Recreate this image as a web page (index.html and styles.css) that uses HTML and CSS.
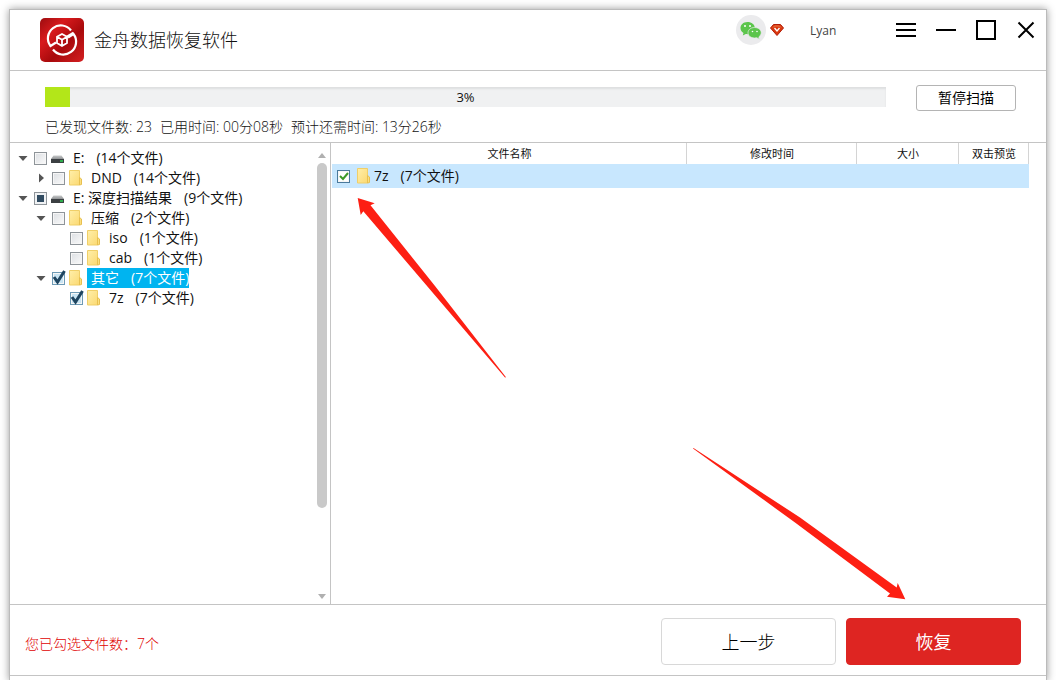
FILE: index.html
```html
<!DOCTYPE html>
<html lang="zh-CN">
<head>
<meta charset="utf-8">
<title>金舟数据恢复软件</title>
<link rel="stylesheet" href="styles.css">
</head>
<body>
<svg class="defs" aria-hidden="true">
  <defs>
    <linearGradient id="red" x1="0" y1="0" x2="1" y2="1">
      <stop offset="0" stop-color="#9c0d10"/><stop offset=".3" stop-color="#d81a1d"/><stop offset=".6" stop-color="#a80a0c"/><stop offset="1" stop-color="#d42022"/>
    </linearGradient>
    <linearGradient id="yellow" x1="0" y1="0" x2="1" y2="1">
      <stop offset="0" stop-color="#ffefaa"/><stop offset="1" stop-color="#fbd972"/>
    </linearGradient>
    <linearGradient id="metal" x1="0" y1="0" x2="0" y2="1">
      <stop offset="0" stop-color="#c9cbcc"/><stop offset="1" stop-color="#8f9294"/>
    </linearGradient>
    <symbol id="folder" viewBox="0 0 15 16">
      <path d="M1.500.5h10v14.500h-10z" fill="url(#yellow)" stroke="#f0cf68"/>
      <path d="M11.500 7.500L13.500 9v5.500l-2 .5z" fill="#fbdf80" stroke="#e8c050"/>
    </symbol>
    <symbol id="drive" viewBox="0 0 15 16">
      <path d="M3.500 5.500h8L14 9H1z" fill="url(#metal)"/>
      <path d="M1 9h13v4H1z" fill="#3b3f42"/>
      <path d="M10 11h3" stroke="#2fae4d" stroke-width="2"/>
    </symbol>
    <symbol id="open" viewBox="0 0 16 16"><path d="M3.500 6h9L8 11z" fill="#555"/></symbol>
    <symbol id="closed" viewBox="0 0 16 16"><path d="M6 3.500v9l5-4.500z" fill="#555"/></symbol>
  </defs>
</svg>
<div class="window">
  <header class="titlebar">
    <svg class="logo" viewBox="0 0 44 44" aria-hidden="true">
      <rect width="44" height="44" rx="5" fill="url(#red)"/>
      <g fill="none" stroke="#fff" stroke-width="2.200">
        <path d="M31 12.500A12.700 12.700 0 0 0 10.500 28L16 24.500"/>
        <path d="M13 31.500A12.700 12.700 0 0 0 33.500 16L28 19.500"/>
        <path d="M22 16l5 2.800v6.200L22 28l-5-3v-6.200zM17 18.800l5 3 5-3M22 21.800V28" stroke-width="1.800"/>
        <path d="M26.500 18.800L33.500 14.500" stroke-width="2"/>
      </g>
    </svg>
    <h1 class="app-name">金舟数据恢复软件</h1>
    <div class="account">
      <svg class="wechat" viewBox="0 0 30 30" aria-hidden="true">
        <circle cx="15" cy="15" r="15" fill="#ebebed"/>
        <path d="M11.500 7C7 7 4.500 10 4.500 13c0 2.200 1.200 3.900 3 5l-.700 2.500 3-1.500c4.500.800 9-1.500 9-6 0-3.500-3.200-6-7.300-6z" fill="#5cc54c"/>
        <path d="M18.500 12.500c-4 0-6.500 2.500-6.500 5.300s2.700 5.200 6.500 5.200l2.200-.300 2.800 1.500-.700-2.300c1.500-1 2.400-2.500 2.400-4.100 0-2.800-2.600-5.300-6.700-5.300z" fill="#5cc54c" stroke="#ebebed" stroke-width=".7"/>
        <g fill="#fff"><circle cx="9" cy="11" r="1"/><circle cx="14" cy="11" r="1"/><circle cx="16.500" cy="16.500" r=".8"/><circle cx="21" cy="16.500" r=".8"/></g>
      </svg>
      <svg class="gem" viewBox="0 0 14 12" aria-hidden="true">
        <path d="M3.500.5h7L13.500 4 7 11.500.5 4z" fill="#d9380f" stroke="#b31d08"/>
        <path d="M3 3.500L4.500 2h5L11 3.500" fill="none" stroke="#f08a50" stroke-width=".8"/>
        <path d="M4.500 4L7 7l2.500-3" fill="none" stroke="#fff" stroke-width="1.300"/>
      </svg>
      <span class="user">Lyan</span>
    </div>
    <nav class="controls">
      <button class="control" aria-label="菜单"><svg viewBox="0 0 20 20"><path d="M0 4h20M0 10h20M0 16h20"/></svg></button>
      <button class="control" aria-label="最小化"><svg viewBox="0 0 20 20"><path d="M0 10h20"/></svg></button>
      <button class="control" aria-label="最大化"><svg viewBox="0 0 20 20"><path d="M1 1h18v18H1z"/></svg></button>
      <button class="control" aria-label="关闭"><svg viewBox="0 0 20 20"><path d="M2.500 2.500l15 15M17.500 2.500l-15 15"/></svg></button>
    </nav>
  </header>

  <section class="scan">
    <div class="scan-info">
      <div class="bar" role="progressbar" aria-valuenow="3" aria-valuemin="0" aria-valuemax="100">
        <div class="bar-fill" style="width: 3%"></div>
        <span class="bar-text">3%</span>
      </div>
      <p class="stats"><span>已发现文件数: 23</span><span>已用时间: 00分08秒</span><span>预计还需时间: 13分26秒</span></p>
    </div>
    <button class="pause">暂停扫描</button>
  </section>

  <main class="content">
    <aside class="side">
      <ul class="tree">
        <li>
          <div class="node"><button class="toggle" aria-label="折叠"><svg><use href="#open"/></svg></button><input class="check" type="checkbox" id="n1"><svg class="icon"><use href="#drive"/></svg><label class="name" for="n1"><span>E:</span><span>(14个文件)</span></label></div>
          <ul class="branch">
            <li><div class="node"><button class="toggle" aria-label="展开"><svg><use href="#closed"/></svg></button><input class="check" type="checkbox" id="n2"><svg class="icon"><use href="#folder"/></svg><label class="name" for="n2"><span>DND</span><span>(14个文件)</span></label></div></li>
          </ul>
        </li>
        <li>
          <div class="node"><button class="toggle" aria-label="折叠"><svg><use href="#open"/></svg></button><input class="check partial" type="checkbox" id="n3"><svg class="icon"><use href="#drive"/></svg><label class="name" for="n3"><span>E: 深度扫描结果</span><span>(9个文件)</span></label></div>
          <ul class="branch">
            <li>
              <div class="node"><button class="toggle" aria-label="折叠"><svg><use href="#open"/></svg></button><input class="check" type="checkbox" id="n4"><svg class="icon"><use href="#folder"/></svg><label class="name" for="n4"><span>压缩</span><span>(2个文件)</span></label></div>
              <ul class="branch">
                <li><div class="node"><span class="toggle"></span><input class="check" type="checkbox" id="n5"><svg class="icon"><use href="#folder"/></svg><label class="name" for="n5"><span>iso</span><span>(1个文件)</span></label></div></li>
                <li><div class="node"><span class="toggle"></span><input class="check" type="checkbox" id="n6"><svg class="icon"><use href="#folder"/></svg><label class="name" for="n6"><span>cab</span><span>(1个文件)</span></label></div></li>
              </ul>
            </li>
            <li>
              <div class="node"><button class="toggle" aria-label="折叠"><svg><use href="#open"/></svg></button><span class="box"><input class="check" type="checkbox" id="n7" checked><svg class="tick" viewBox="0 0 16 16"><path d="M3 7l3.500 5L13.500 1"/></svg></span><svg class="icon"><use href="#folder"/></svg><label class="name selected" for="n7"><span>其它</span><span>(7个文件)</span></label></div>
              <ul class="branch">
                <li><div class="node"><span class="toggle"></span><span class="box"><input class="check" type="checkbox" id="n8" checked><svg class="tick" viewBox="0 0 16 16"><path d="M3 7l3.500 5L13.500 1"/></svg></span><svg class="icon"><use href="#folder"/></svg><label class="name" for="n8"><span>7z</span><span>(7个文件)</span></label></div></li>
              </ul>
            </li>
          </ul>
        </li>
      </ul>
      <div class="scrollbar" aria-hidden="true">
        <svg viewBox="0 0 8 5"><path d="M0 5h8L4 0z"/></svg>
        <div class="track"><div class="thumb"></div></div>
        <svg viewBox="0 0 8 5"><path d="M0 0h8L4 5z"/></svg>
      </div>
    </aside>
    <div class="files">
      <table class="list">
        <colgroup><col><col class="col-time"><col class="col-size"><col class="col-view"></colgroup>
        <thead><tr><th>文件名称</th><th>修改时间</th><th>大小</th><th>双击预览</th></tr></thead>
        <tbody>
          <tr><td colspan="4"><div class="file"><span class="box"><input class="check plain" type="checkbox" id="f1" checked><svg class="tick green" viewBox="0 0 16 16"><path d="M4 8l3 3 5-6"/></svg></span><svg class="icon"><use href="#folder"/></svg><label class="file-name" for="f1"><span>7z</span><span>(7个文件)</span></label></div></td></tr>
        </tbody>
      </table>
    </div>
    <svg class="pointer to-file" viewBox="357 197 150 182" aria-hidden="true"><path d="M357.700 198L374.700 203.300 370.500 205.300 435 286 506 377.300 505 377.600 430 289.500 363.300 211.300 360.700 215z"/></svg>
    <svg class="pointer to-restore" viewBox="692 447 214 153" aria-hidden="true"><path d="M905.300 599.300L897.700 583 896.700 587.500 800 517.500 693.500 448 693 448.600 795 522.500 890 593.500 887 596.700z"/></svg>
  </main>

  <footer class="actions">
    <p class="chosen">您已勾选文件数：7个</p>
    <button class="action">上一步</button>
    <button class="action primary">恢复</button>
  </footer>
</div>
</body>
</html>
```
FILE: styles.css
```css
* { box-sizing: border-box; }

body {
  margin: 0;
  padding: 10px 10px 0;
  height: 100vh;
  overflow: hidden;
  background: #fff;
  color: #111;
  font: 300 14px/20px "Open Sans", "Noto Sans CJK SC", sans-serif;
}

button, input { margin: 0; padding: 0; font: inherit; color: inherit; }
button { border: 0; background: none; }
svg { display: block; flex: none; }
ul { margin: 0; padding: 0; list-style: none; }
p, h1 { margin: 0; }

.defs { position: absolute; width: 0; height: 0; }

.window {
  display: flex;
  flex-direction: column;
  height: 100%;
  padding-bottom: 4px;
  background: #fff;
  box-shadow: 0 0 0 1px #bbb, 0 0 8px 1px #999;
}

.titlebar {
  display: flex;
  align-items: center;
  height: 61px;
  padding-left: 30px;
  border-bottom: 1px solid #c4c4c4;
}
.logo { width: 44px; height: 44px; }
.app-name {
  flex: 1;
  margin-left: 10px;
  font-size: 18px;
  font-weight: 300;
  line-height: 24px;
}
.account, .controls { display: flex; align-items: center; align-self: flex-start; height: 40px; }
.wechat { width: 30px; height: 30px; }
.gem { width: 14px; height: 12px; margin-left: 4px; }
.user { width: 76px; margin-left: 26px; padding-top: 2px; font-size: 12px; font-weight: 400; color: #444; }
.control { display: grid; place-items: center; width: 40px; height: 40px; }
.control svg { width: 20px; height: 20px; fill: none; stroke: #000; stroke-width: 2; }

.scan {
  display: flex;
  align-items: flex-start;
  gap: 30px;
  height: 72px;
  padding: 14px 30px 0 35px;
  border-bottom: 1px solid #c4c4c4;
}
.scan-info { flex: 1; padding-top: 2px; }
.bar {
  display: grid;
  height: 20px;
  background: #f0f1f2;
  box-shadow: inset 0 2px 2px #dedfe0;
}
.bar > * { grid-area: 1 / 1; }
.bar-fill { background: #b3e619; }
.bar-text { text-align: center; font-size: 13px; font-weight: 400; }
.stats { display: flex; gap: 8px; margin-top: 10px; }
.pause {
  width: 100px;
  height: 26px;
  border: 1px solid #b4b4b4;
  border-radius: 3px;
  font-weight: 400;
  color: #000;
}

.content { position: relative; display: flex; flex: 1; min-height: 0; border-bottom: 1px solid #c4c4c4; }
.side { display: flex; width: 321px; border-right: 1px solid #c4c4c4; }
.tree { flex: 1; padding: 5px 0 0 5px; }
.branch { padding-left: 18px; }
.node { display: flex; align-items: center; height: 20px; font-weight: 400; }
.toggle { width: 16px; height: 16px; margin-right: 3px; }
.toggle svg { width: 16px; height: 16px; }
.check {
  display: block;
  appearance: none;
  flex: none;
  width: 13px;
  height: 13px;
  border: 1px solid #8e9499;
  background: linear-gradient(135deg, #dcdfe3, #fafafa);
  box-shadow: inset 0 0 0 1px #f6f6f6;
}
.partial { background: #304b61; box-shadow: inset 0 0 0 2px #f0f2f4; }
.box { position: relative; width: 13px; height: 13px; }
.box .check { border-color: #6d9ab5; background: #c8e4f3; }
.box .plain { border-color: #4a7a9c; background: #fff; }
.tick { position: absolute; left: -1px; top: -2px; width: 16px; height: 16px; fill: none; stroke: #1f4560; stroke-width: 3; pointer-events: none; }
.green { stroke: #3c9a28; stroke-width: 2; }
.icon { width: 15px; height: 16px; margin-left: 3px; }
.name { display: flex; gap: 12px; height: 20px; margin-left: 4px; padding-left: 4px; }
.selected { background: #00b4f0; color: #fff; }

.scrollbar { display: flex; flex-direction: column; align-items: center; width: 10px; margin-right: 3px; padding: 10px 0 5px; }
.scrollbar svg { width: 8px; height: 5px; fill: #b0b0b0; }
.track { flex: 1; width: 10px; padding: 5px 0; }
.thumb { width: 10px; height: 81%; border-radius: 5px; background: #c9c9c9; }

.files { flex: 1; padding: 0 17px 0 1px; }
.list { width: 100%; table-layout: fixed; border-collapse: separate; border-spacing: 0; }
.col-time { width: 170px; }
.col-size { width: 102px; }
.col-view { width: 70px; }
.list th {
  height: 21px;
  padding: 0 0 0 1px;
  border-right: 1px solid #d4d4d4;
  font-size: 11px;
  font-weight: 400;
  line-height: 20px;
  color: #111;
}
.list td { height: 24px; padding: 0 0 0 5px; background: #c8e7fe; }
.file { display: flex; align-items: center; gap: 3px; font-weight: 400; }
.file-name { display: flex; gap: 12px; }

.pointer { position: absolute; fill: #fd1f13; pointer-events: none; }
.to-file { left: 347px; top: 54px; width: 150px; height: 182px; }
.to-restore { right: 140px; bottom: 4px; width: 214px; height: 153px; }

.actions {
  display: flex;
  align-items: center;
  gap: 10px;
  height: 71px;
  padding: 3px 25px 0 15px;
  border-bottom: 1px solid #c4c4c4;
}
.chosen { flex: 1; padding-top: 5px; color: #e00000; }
.action {
  width: 175px;
  height: 47px;
  border: 1px solid #d8d8d8;
  border-radius: 4px;
  font-size: 18px;
  color: #000;
}
.primary { border-color: #de2522; background: #de2522; color: #fff; font-weight: 400; }
```
